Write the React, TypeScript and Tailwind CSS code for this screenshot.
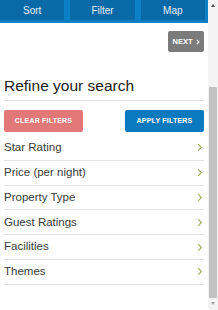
const filters = [
  "Star Rating",
  "Price (per night)",
  "Property Type",
  "Guest Ratings",
  "Facilities",
  "Themes",
];

function Chevron() {
  return (
    <svg width="6" height="9" viewBox="0 0 6 9" className="shrink-0">
      <path d="M1.2 1.2l3.2 3.3L1.2 7.8" fill="none" stroke="#a3ab55" strokeWidth="1.1" />
    </svg>
  );
}

export default function App() {
  return (
    <div className="flex h-[310px] w-[218px] overflow-hidden bg-white font-['Liberation_Sans',Arial,sans-serif]">
      <div className="flex w-[208px] flex-col">
        {/* top tabs */}
        <div className="flex h-[23px] gap-[6px] bg-[#0c80c4] pb-[3px] pr-[3px]">
          {["Sort", "Filter", "Map"].map((t) => (
            <button
              key={t}
              type="button"
              className="flex flex-1 items-center justify-center bg-[#096aa7] text-[10px] text-[#e2edf5]"
            >
              {t}
            </button>
          ))}
        </div>

        <div className="flex justify-end pr-[4px] pt-[8px]">
          <button
            type="button"
            className="flex h-[21px] w-[36px] items-center justify-center gap-[3px] rounded-[2px] bg-[#7b7b7b] text-[7.5px] font-bold text-white"
          >
            NEXT
            <svg width="4" height="6" viewBox="0 0 4 6">
              <path d="M0.8 0.8L3 3 0.8 5.2" fill="none" stroke="white" strokeWidth="1.2" />
            </svg>
          </button>
        </div>

        <div className="px-[4px]">
          <h2 className="mt-[25px] border-b border-[#e3e3e3] pb-[5px] text-[15.5px] leading-[18px] text-[#222]">
            Refine your search
          </h2>

          <div className="mt-[9px] flex justify-between">
            <button
              type="button"
              className="h-[22px] w-[79px] rounded-[2px] bg-[#e27878] text-[7px] font-bold tracking-[0.2px] text-white"
            >
              CLEAR FILTERS
            </button>
            <button
              type="button"
              className="h-[22px] w-[79px] rounded-[2px] bg-[#0b79be] text-[7px] font-bold tracking-[0.2px] text-white"
            >
              APPLY FILTERS
            </button>
          </div>

          <ul className="mt-[4px]">
            {filters.map((f) => (
              <li
                key={f}
                className="flex h-[24.8px] items-center justify-between border-b border-[#e3e3e3] pr-[1px] text-[11.5px] text-[#3a3a3a]"
              >
                <span>{f}</span>
                <Chevron />
              </li>
            ))}
          </ul>
        </div>
      </div>

      {/* scrollbar */}
      <div className="flex w-[10px] flex-col items-center bg-[#f3f3f3]">
        <div className="mt-[4px] h-0 w-0 border-x-[2px] border-b-[3px] border-x-transparent border-b-[#505050]" />
        <div className="mt-[80px] h-[211px] w-[8px] bg-[#c2c2c2]" />
        <div className="mt-[4px] h-0 w-0 border-x-[2px] border-t-[3px] border-x-transparent border-t-[#a0a0a0]" />
      </div>
    </div>
  );
}
